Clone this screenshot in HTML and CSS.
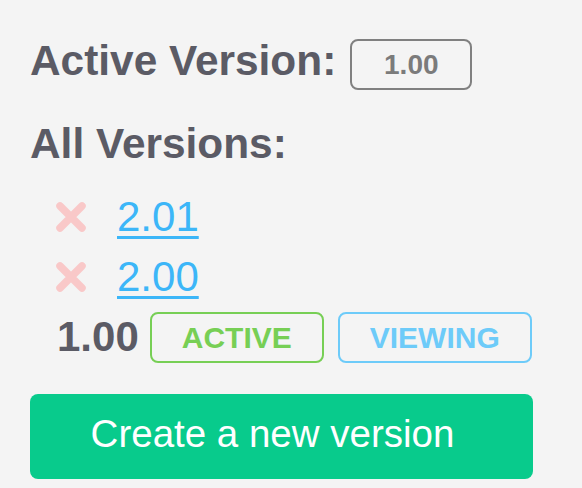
FILE: index.html
```html
<!DOCTYPE html>
<html lang="en">
<head>
<meta charset="utf-8">
<title>Versions</title>
<link rel="stylesheet" href="styles.css">
</head>
<body>
<main class="panel">
  <div class="active-row">
    <h2 class="heading">Active Version:</h2>
    <span class="tag tag-gray">1.00</span>
  </div>
  <h2 class="heading heading-all">All Versions:</h2>
  <ul class="versions">
    <li class="version">
      <svg class="remove" viewBox="0 0 32 32" aria-hidden="true"><path d="M5 5 L27 27 M27 5 L5 27" /></svg>
      <a class="version-link" href="#">2.01</a>
    </li>
    <li class="version">
      <svg class="remove" viewBox="0 0 32 32" aria-hidden="true"><path d="M5 5 L27 27 M27 5 L5 27" /></svg>
      <a class="version-link" href="#">2.00</a>
    </li>
    <li class="version version-current">
      <span class="current">1.00</span>
      <span class="tag tag-green">ACTIVE</span>
      <span class="tag tag-blue">VIEWING</span>
    </li>
  </ul>
  <button class="create" type="button">Create a new version</button>
</main>
</body>
</html>
```
FILE: styles.css
```css
html, body {
  margin: 0;
  padding: 0;
  background: #f4f4f4;
}
body {
  font-family: "Liberation Sans", Arial, sans-serif;
  color: #5b5b65;
}
.panel {
  padding: 39px 0 0 30px;
  width: 503px;
}
.active-row {
  display: flex;
  align-items: flex-start;
  gap: 14px;
}
.heading {
  margin: 0;
  font-size: 42.4px;
  font-weight: bold;
  line-height: 43px;
  color: #5b5b65;
}
.heading-all {
  margin-top: 32px;
}
.tag {
  box-sizing: border-box;
  display: inline-block;
  height: 51px;
  line-height: 47px;
  border: 2px solid;
  border-radius: 8px;
  font-weight: bold;
  font-size: 30px;
  text-align: center;
}
.tag-gray {
  width: 122px;
  font-size: 28px;
  border-color: #808080;
  color: #7b7b7b;
}
.tag-green {
  width: 174px;
  border-color: #77cf55;
  color: #77cf55;
}
.tag-blue {
  width: 194px;
  border-color: #6dcbf9;
  color: #6dcbf9;
}
.versions {
  list-style: none;
  margin: 22px 0 0;
  padding: 0 0 0 25px;
}
.version {
  display: flex;
  align-items: center;
  height: 60px;
}
.remove {
  width: 32px;
  height: 32px;
  margin-right: 30px;
}
.remove path {
  stroke: #f9c8c8;
  stroke-width: 7.5;
  stroke-linecap: round;
  fill: none;
}
.version-link {
  font-size: 42px;
  color: #3cb6f8;
  text-decoration: underline;
  text-decoration-thickness: 3px;
  text-underline-offset: 5px;
}
.current {
  font-size: 42px;
  font-weight: bold;
  margin: 0 11px 0 2px;
}
.tag-blue {
  margin-left: 14px;
}
.create {
  display: block;
  box-sizing: border-box;
  margin-top: 27px;
  width: 503px;
  height: 85px;
  border: 0;
  border-radius: 8px;
  background: #08cb8c;
  color: #ffffff;
  font-family: "Liberation Sans", Arial, sans-serif;
  font-size: 38.5px;
  padding: 0 18px 6px 0;
  cursor: pointer;
}
```
